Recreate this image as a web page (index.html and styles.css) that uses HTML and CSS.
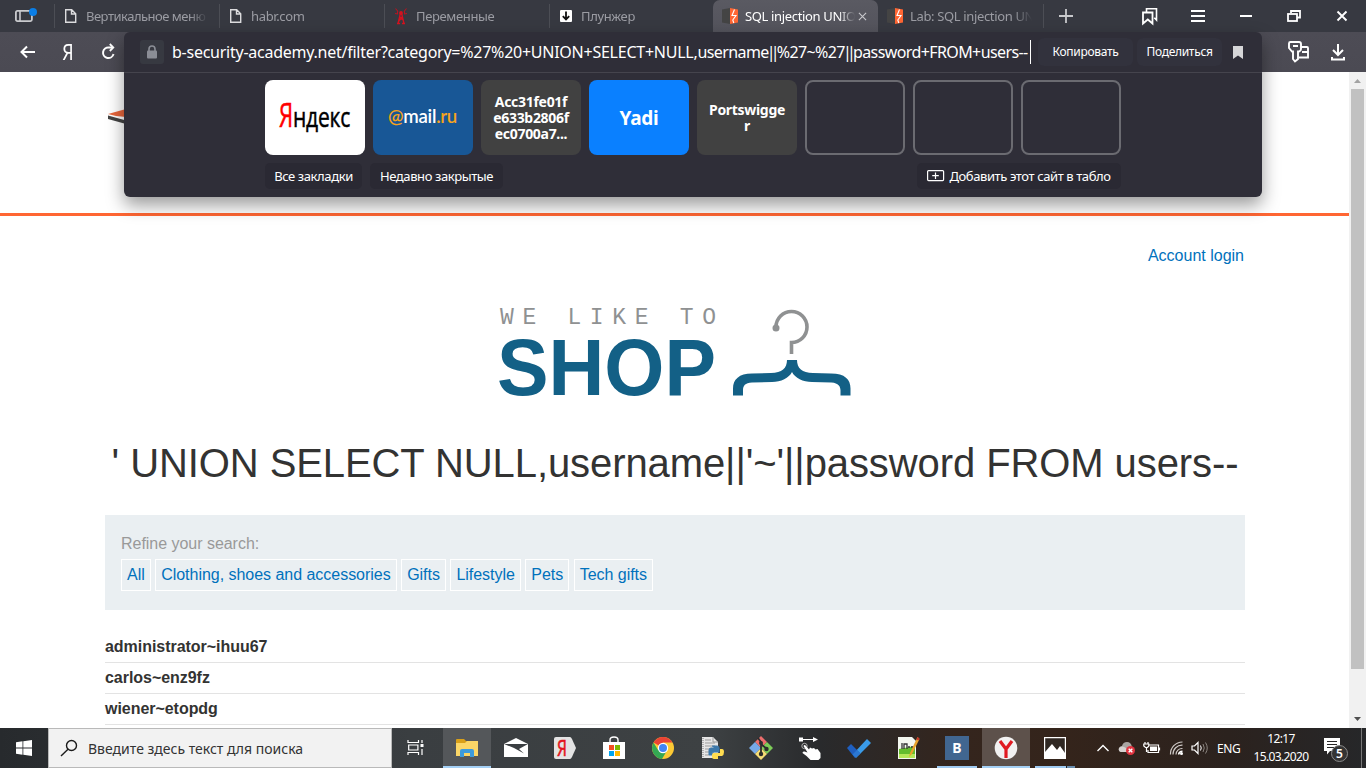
FILE: index.html
```html
<!DOCTYPE html>
<html lang="ru">
<head>
<meta charset="utf-8">
<title>SQL injection UNION</title>
<link rel="stylesheet" href="styles.css">
</head>
<body>
<div class="screen">
  <div class="tabbar">
    <div class="panel-btn"><svg width="24" height="18" viewBox="0 0 24 18"><rect x="1.9" y="4.9" width="16" height="10.200" rx="1.500" fill="none" stroke="#c9cacd" stroke-width="1.800"/><path d="M6 5v10" stroke="#c9cacd" stroke-width="1.600"/><circle cx="19" cy="6" r="4" fill="#0a7ee6"/></svg></div>
    <div class="tab"><svg class="fav" viewBox="0 0 16 16"><path d="M2.700 1.700h6l4 4v8.600h-10zM8.500 2v4h4" fill="none" stroke="#dcdcde" stroke-width="1.400"/></svg><span class="tt t1">Вертикальное меню</span></div>
    <div class="tab"><svg class="fav" viewBox="0 0 16 16"><path d="M2.700 1.700h6l4 4v8.600h-10zM8.500 2v4h4" fill="none" stroke="#dcdcde" stroke-width="1.400"/></svg><span class="tt">habr.com</span></div>
    <div class="tab"><svg class="fav" viewBox="0 0 16 16"><path d="M7.500 5L5 15.500M8.500 5L11 15.500M6 11h4.500M6.500 8.500l4 4M9.500 8.500l-4 5M4 15.500h3M9 15.500h3" stroke="#d5121f" stroke-width="1.300" fill="none"/><path d="M2.500 .500l2.500 3M13.500 .500l-2.500 3M2 5.500l3 .500M14 5.500l-3 .500M4.500 3v3M11.500 3v3" stroke="#b51522" stroke-width="1.100" fill="none"/><circle cx="8" cy="5" r="1.900" fill="#d5121f"/></svg><span class="tt">Переменные</span></div>
    <div class="tab nosep"><svg class="fav" viewBox="0 0 16 16"><rect x="2" y="2" width="12" height="12" rx="1" fill="#fff"/><path d="M8 3.500v8M4.800 8.200L8 11.500l3.200-3.300" stroke="#111" stroke-width="1.800" fill="none"/></svg><span class="tt">Плунжер</span></div>
    <div class="tab active"><svg class="fav" viewBox="0 0 16 16"><path d="M0 1.500L8 0v16l-8-1.500z" fill="#444"/><path d="M8 0l8 1.500v13L8 16z" fill="#ff6633"/><path d="M12.500 1.500L10 7.500h4L10.800 12l1 3" stroke="#fff" stroke-width="1.100" fill="none"/></svg><span class="tt">SQL injection UNION</span><svg class="close" viewBox="0 0 10 10"><path d="M1 1l8 8M9 1L1 9" stroke="#c9c9cd" stroke-width="1.200"/></svg></div>
    <div class="tab last"><svg class="fav" viewBox="0 0 16 16"><path d="M0 1.500L8 0v16l-8-1.500z" fill="#444"/><path d="M8 0l8 1.500v13L8 16z" fill="#ff6633"/><path d="M12.500 1.500L10 7.500h4L10.800 12l1 3" stroke="#fff" stroke-width="1.100" fill="none"/></svg><span class="tt">Lab: SQL injection UNION</span></div>
    <div class="plus"><svg width="16" height="16" viewBox="0 0 16 16"><path d="M8 1v14M1 8h14" stroke="#c8c9cc" stroke-width="1.800"/></svg></div>
    <div class="winbtns">
      <svg viewBox="0 0 18 18"><path d="M5.500 5V1.800h10V13l-2.200-2.300" fill="none" stroke="#fff" stroke-width="1.600"/><path d="M2 5.500h9.500v11l-4.700-4-4.800 4z" fill="none" stroke="#fff" stroke-width="1.800"/></svg>
      <svg viewBox="0 0 18 18"><path d="M2 4h14M2 9h14M2 14h14" stroke="#fff" stroke-width="2"/></svg>
      <svg viewBox="0 0 18 18"><path d="M3 9h12" stroke="#fff" stroke-width="2"/></svg>
      <svg viewBox="0 0 18 18"><path d="M6 6V4h9v6.500h-3" fill="none" stroke="#fff" stroke-width="1.800"/><rect x="3" y="7" width="9" height="7" fill="none" stroke="#fff" stroke-width="1.800"/></svg>
      <svg viewBox="0 0 18 18"><path d="M4.500 4.500l9 9M13.500 4.500l-9 9" stroke="#fff" stroke-width="1.900"/></svg>
    </div>
  </div>
  <div class="toolbar">
    <svg class="nav" viewBox="0 0 20 20"><path d="M17 10H4M9 4.500L3.500 10 9 15.500" fill="none" stroke="#fff" stroke-width="2"/></svg>
    <span class="ya">Я</span>
    <svg class="nav" viewBox="0 0 20 20"><path d="M15.500 12A5.300 5.300 0 1 1 11 5.500h4" fill="none" stroke="#fff" stroke-width="2"/><path d="M11.800 2L15.300 5.500l-3.500 3.500" fill="none" stroke="#fff" stroke-width="1.800"/></svg>
    <div class="right-tools">
      <svg width="24" height="24" viewBox="0 0 24 24"><path d="M2 3.500Q2 2 3.500 2H12Q14 2 14 4V9q0 2-2 2.500h-1V19l-3 2.500L6 19v-7.500H5L2 8z" fill="none" stroke="#fff" stroke-width="1.900"/><path d="M6 6h5M14 7h6q1 0 1 1v9.500h-9M15 12h6" fill="none" stroke="#fff" stroke-width="1.900"/></svg>
      <svg width="18" height="20" viewBox="0 0 18 20"><path d="M9 2v11M4 8l5 5 5-5M3 15v2.500h12V15" fill="none" stroke="#fff" stroke-width="2"/></svg>
    </div>
  </div>
  <div class="viewport">
    <div class="page">
      <header class="site-head">
        <svg width="42" height="24" viewBox="0 0 42 24"><path d="M2 6L20 1V9L10 8z" fill="#e8663c"/><path d="M2 7.500L20 12.500V16L2 11z" fill="#444"/></svg>
      </header>
      <main class="container">
        <div class="account"><a>Account login</a></div>
        <svg class="shop" width="352" height="92" viewBox="0 0 352 92" role="img">
          <text class="like" x="0" y="18" textLength="216">WE LIKE TO</text>
          <text class="shopword" x="-3" y="89" textLength="219" lengthAdjust="spacingAndGlyphs">SHOP</text>
          <path d="M276 20A15.500 15.500 0 1 1 291.500 35.500V47" transform="translate(0 1)" fill="none" stroke="#8f9192" stroke-width="3.600"/><circle cx="276" cy="22" r="3.500" fill="#8f9192"/>
          <path d="M287 54h10c0 8 5 13 16 13l18 .500c14 0 19.500 6 19.500 15v7h-10v-5c0-4-2-7.500-9-8l-19.500-.500c-9 0-17-4-20-10-3 6-11 10-20 10l-20 .500c-7 .500-9 3-9 8v5h-10v-7c0-9 6-15 19-15l19-.500c11 0 16-5 16-13z" fill="#136086"/>
        </svg>
        <h1>' UNION SELECT NULL,username||'~'||password FROM users--</h1>
        <section class="filter">
          <label>Refine your search:</label>
          <div class="tags"><a>All</a><a>Clothing, shoes and accessories</a><a>Gifts</a><a>Lifestyle</a><a>Pets</a><a>Tech gifts</a></div>
        </section>
        <div class="rows"><div>administrator~ihuu67</div><div>carlos~enz9fz</div><div>wiener~etopdg</div></div>
      </main>
    </div>
    <div class="scroll">
      <svg width="17" height="17" viewBox="0 0 17 17"><path d="M5 11l3.500-4 3.500 4z" fill="#a3a3a3"/></svg>
      <div class="thumb"></div>
      <svg class="down" width="17" height="17" viewBox="0 0 17 17"><path d="M5 6l3.500 4L12 6z" fill="#505050"/></svg>
    </div>
  </div>

  <div class="taskbar">
    <div class="start"><svg width="16" height="16" viewBox="0 0 16 16"><path d="M0 2.300L6.500 1.300V7.600H0zM7.300 1.200L16 0v7.600H7.300zM0 8.400h6.500v6.300L0 13.700zM7.300 8.400H16V16l-8.700-1.200z" fill="#fff"/></svg></div>
    <div class="search"><svg width="18" height="18" viewBox="0 0 18 18"><circle cx="11.500" cy="6.500" r="5" fill="none" stroke="#1b1b1b" stroke-width="1.400"/><path d="M8 10.200L1 17" stroke="#1b1b1b" stroke-width="1.400"/></svg><span>Введите здесь текст для поиска</span></div>
    <div class="tv"><svg width="18" height="18" viewBox="0 0 18 18"><path d="M1 1v2.500h10.500V1M1 16v-2.500h10.500V16M1.700 6h9.200v5H1.700zM15 1v3M15 10v6" fill="none" stroke="#fff" stroke-width="1.200"/><path d="M13.500 5h3v3h-3z" fill="#fff"/></svg></div>
    <div class="apps">
      <div class="app on full"><svg viewBox="0 0 24 24"><path d="M1 4q0-1 1-1h7l2 2H22q1 0 1 1V20H1z" fill="#d9a019"/><path d="M1 7h9l2-2h11v15H1z" fill="#fbd667"/><path d="M5 20v-5q0-2 2-2h10q2 0 2 2v6h-4v-4H9v4H5z" fill="#3d9bdc"/></svg></div>
      <div class="app"><svg viewBox="0 0 24 24"><path d="M0 8L12 2l12 6v13H0z" fill="#fff"/><path d="M0 8h24L15 13l5 4.500L10 12z" fill="#3a3e41"/></svg></div>
      <div class="app"><svg viewBox="0 0 24 24"><path d="M3 1h14q1 0 2 2l4 9-4 9q-1 2-2 2H3q-2 0-2-2V3q0-2 2-2z" fill="#e4e4e4"/><text x="4" y="20" class="yab" textLength="10" lengthAdjust="spacingAndGlyphs">Я</text></svg></div>
      <div class="app"><svg viewBox="0 0 24 24"><path d="M1 6h22v17H1z" fill="#fff"/><path d="M8 7V4q0-3 4-3t4 3v3" fill="none" stroke="#fff" stroke-width="1.400"/><path d="M7 9h5v5H7z" fill="#f25022"/><path d="M13 9h5v5h-5z" fill="#7fba00"/><path d="M7 15h5v5H7z" fill="#00a4ef"/><path d="M13 15h5v5h-5z" fill="#ffb900"/></svg></div>
      <div class="app"><svg viewBox="0 0 24 24"><circle cx="12" cy="12" r="11" fill="#fcc934"/><path d="M12 12L2.500 6.500A11 11 0 0 1 21.500 6.500H12z" fill="#ea4335"/><path d="M2.500 6.500A11 11 0 0 0 11 23l5-8.500L12 12 7 14z" fill="#34a853"/><circle cx="12" cy="12" r="5.200" fill="#fff"/><circle cx="12" cy="12" r="4" fill="#4285f4"/></svg></div>
      <div class="app"><svg viewBox="0 0 24 24"><path d="M2 1h11l5 5v16H2z" fill="#e6e6e6"/><path d="M13 1v5h5M5 4h6M5 7h10M5 10h10M5 13h5M5 16h5M5 19h4" fill="none" stroke="#9b9b9b"/><path d="M3 2v19" stroke="#777" stroke-dasharray="1 1"/><path d="M12 10h5q2 0 2 2v4h-5q-2 0-2 3H9v-5q0-2 2-2h3" fill="#3c78aa" stroke="#3c78aa"/><path d="M20 13h2q2 0 2 3t-2 4h-4v3h-4q-2 0-2-2v-2q0-2 2-2h6z" fill="#ffdc50"/></svg></div>
      <div class="app"><svg viewBox="0 0 24 24"><path d="M12 0l6 6-6 6-6-6z" fill="#ec6d6d"/><path d="M6 6l6 6-6 6-6-6z" fill="#76a9e8"/><path d="M18 6l6 6-6 6-6-6z" fill="#7dcc58"/><path d="M12 12l6 6-6 6-6-6z" fill="#f5dc75"/><path d="M9 2l3 4v13M12 8l6 5" fill="none" stroke="#2c2c2c" stroke-width="1.800"/><circle cx="12" cy="7" r="2" fill="#2c2c2c"/><circle cx="12" cy="18" r="2.200" fill="#2c2c2c"/><circle cx="17.500" cy="13" r="2.200" fill="#2c2c2c"/></svg></div>
      <div class="app"><svg viewBox="0 0 24 24"><path d="M1 1.500h4v4H1zM15 1l5 2.500L15 6z" fill="#fff"/><path d="M5 3.500h12" stroke="#fff"/><circle cx="6.500" cy="10" r="2.700" fill="none" stroke="#aaa"/><path d="M5.500 10q1-2 2.500 0l3 3.500 1-2 2 1 2-.500 1.500 1.500 2-.500 3 4v5l-2 2h-8l-4-4-4-3q0-2 2-1.500l3 1z" fill="#fff"/></svg></div>
      <div class="app"><svg viewBox="0 0 24 24"><path d="M6 18L20 3l4 4L9 22z" fill="#3a9be8"/><path d="M0 12l4-4 9 9-5 5z" fill="#1f5fc0"/><path d="M8.500 21.500L5.500 18.500 10 14l3.500 3.500z" fill="#2b78d4"/></svg></div>
      <div class="app"><svg viewBox="0 0 24 24"><path d="M2 1h14l4 4v18H2z" fill="#f4f7f0"/><path d="M3 13l16-3v12H3z" fill="#63bd2d"/><path d="M3 18h16v4H3z" fill="#b4e858"/><path d="M6 13V7M8 13V8h3v5M12 11h2M15 11h2" stroke="#333" stroke-width="1.300" fill="none"/><path d="M21.500 1L14 17l-1 4 3-3L23.500 3z" fill="#e9a32c"/><path d="M21.500 1l2 1.500-1 2-2-1z" fill="#c6352c"/></svg></div>
      <div class="app line"><span class="vk">B</span></div>
      <div class="app on2 full"><svg viewBox="0 0 24 24"><circle cx="12" cy="12" r="11.300" fill="#f1f1f1"/><path d="M6 5l6 8 6-8M12 12v10" fill="none" stroke="#e01a22" stroke-width="3.200"/></svg></div>
      <div class="app line two"><svg viewBox="0 0 24 24"><path d="M1.600 1.600h20.800v20.800H1.600z" fill="#2f2722" stroke="#fff" stroke-width="1.200"/><path d="M2 16l7-8 5 6 3-4 5 7v5H2z" fill="#fff"/></svg></div>
    </div>
    <div class="tray">
      <svg class="chev" width="14" height="10" viewBox="0 0 14 10"><path d="M1.500 8L7 2.500 12.500 8" fill="none" stroke="#fff" stroke-width="1.400"/></svg>
      <svg class="cloud" width="18" height="16" viewBox="0 0 18 16"><path d="M3 12q-3-1-2-4 1-2 3-2 1-4 5-4 4 0 5 5v5z" fill="#a9a5a2"/><path d="M3 12q-3-1-2-4 3-3 7 0l3 4z" fill="#d5d2d0"/><circle cx="12.500" cy="10.500" r="4.500" fill="#e03440"/><path d="M10.700 8.700l3.600 3.600M14.300 8.700l-3.600 3.600" stroke="#fff" stroke-width="1.400"/></svg>
      <svg class="bat" width="17" height="14" viewBox="0 0 17 14"><path d="M6 4h9.500v7.500H5V9M16.500 6.500v3M2 1v2M5 1v2M.800 3h5v2L4.500 6.500h-2L.800 5zM3.500 6v5" fill="none" stroke="#fff" stroke-width="1.200"/><path d="M7 5.500h7v4.500H7z" fill="#fff"/></svg>
      <svg class="wifi" width="16" height="16" viewBox="0 0 16 16"><path d="M1.500 14.500A12 12 0 0 1 13.500 2M4 14.500A9 9 0 0 1 13.500 5.200M7 14.500a6 6 0 0 1 6.500-6" fill="none" stroke="#cfcac7" stroke-width="1.200"/><path d="M9.500 14.500a4 4 0 0 1 4-3.200" fill="none" stroke="#fff" stroke-width="1.400"/><circle cx="12.500" cy="13.500" r="1.500" fill="#fff"/></svg>
      <svg class="snd" width="18" height="14" viewBox="0 0 18 14"><path d="M1 5h2.500L7 1.500v11L3.500 9H1z" fill="none" stroke="#fff" stroke-width="1.200"/><path d="M9.500 4.500q1.500 2.500 0 5" fill="none" stroke="#fff"/><path d="M12 3q2.500 4 0 8M14.500 1.500q3.500 5.500 0 11" fill="none" stroke="#8b8580"/></svg>
      <span class="lang">ENG</span>
      <div class="clock"><span>12:17</span><span class="date">15.03.2020</span></div>
      <div class="note"><svg width="26" height="26" viewBox="0 0 26 26"><path d="M1 1h16v13H7l-3 3.500V14H1z" fill="#fff"/><path d="M4 4.500h10M4 7.500h10M4 10.500h7" stroke="#282727" stroke-width="1.200"/><circle cx="16.500" cy="16.500" r="8" fill="#343434" stroke="#8a8a8a" stroke-width="1"/></svg><b>5</b></div>
    </div>
  </div>

  <div class="omni">
    <div class="urlrow">
      <div class="lock"><svg width="12" height="14" viewBox="0 0 12 14"><path d="M3 6V4q0-3 3-3t3 3v2" fill="none" stroke="#8b8e96" stroke-width="1.600"/><rect x="1" y="5.500" width="10" height="8" rx="1" fill="#8b8e96"/></svg></div>
      <span class="url">b-security-academy.net/filter?category=%27%20+UNION+SELECT+NULL,<span class="tight">username<span class="pp">||</span>%27~%27<span class="pp">||</span>password+FROM+users--</span></span>
      <i class="caret"></i>
      <span class="ubtn copy">Копировать</span><span class="ubtn share">Поделиться</span>
      <svg class="bm" width="10" height="13" viewBox="0 0 10 13"><path d="M0 0h10v13L5 9.500 0 13z" fill="#d6d6d8"/></svg>
    </div>
    <div class="tiles">
      <div class="tile white"><svg width="72" height="32" viewBox="0 0 72 32"><text x="0" y="25" class="yar" textLength="14" lengthAdjust="spacingAndGlyphs">Я</text><text x="14" y="25" class="yan" textLength="57" lengthAdjust="spacingAndGlyphs">ндекс</text></svg></div>
      <div class="tile mail"><svg width="72" height="24" viewBox="0 0 72 24"><text x="1" y="17" class="mr" textLength="69" lengthAdjust="spacingAndGlyphs"><tspan class="or">@</tspan>mail<tspan class="or">.ru</tspan></text></svg></div>
      <div class="tile gray"><span>Acc31fe01f<br>e633b2806f<br>ec0700a7...</span></div>
      <div class="tile blue"><span>Yadi</span></div>
      <div class="tile gray"><span>Portswigge<br>r</span></div>
      <div class="tile empty"></div><div class="tile empty"></div><div class="tile empty"></div>
    </div>
    <div class="foot"><span class="fb a">Все закладки</span><span class="fb b">Недавно закрытые</span><span class="fb c"><svg width="18" height="12" viewBox="0 0 18 12"><rect x=".6" y=".6" width="16" height="10" rx="1" fill="none" stroke="#fff" stroke-width="1.200"/><path d="M8.500 2.500v6.500M5.200 5.700h6.600" stroke="#fff" stroke-width="1.200"/></svg><em>Добавить этот сайт в табло</em></span></div>
  </div>
</div>
</body>
</html>
```
FILE: styles.css
```css
* { box-sizing: border-box; }
body { margin: 0; overflow: hidden; font-family: "Noto Sans", "Open Sans", sans-serif; }
svg { display: block; flex: none; overflow: visible; }
.screen { position: relative; width: 1366px; height: 768px; display: flex; flex-direction: column; overflow: hidden; background: #fff; white-space: nowrap; }

.tabbar { height: 32px; flex: none; display: flex; background: #373941; color: #9b9ca3; font-size: 13px; }
.panel-btn { width: 54px; padding: 6px 0 0 14px; }
.tab { width: 165px; display: flex; align-items: center; padding: 0 13px 0 9px; background: linear-gradient(#4c4e55, #4c4e55) 0 4px / 1px 24px no-repeat; }
.tab .fav { width: 16px; height: 16px; margin-right: 7px; }
.tt { overflow: hidden; width: 122px; flex: none; letter-spacing: -.35px; -webkit-mask-image: linear-gradient(90deg, #000 85%, transparent); }
.t1 { letter-spacing: -.5px; }
.nosep { width: 164px; }
.active { background: linear-gradient(#5a5a62, #53535c); color: #fff; border-radius: 7px 7px 0 0; }
.active .tt { width: 110px; }
.active .close { width: 9px; height: 9px; margin-left: 3px; }
.last { width: 166px; background: linear-gradient(#4c4e55, #4c4e55) 100% 4px / 1px 24px no-repeat; }
.plus { margin-left: 14px; padding-top: 8px; width: 46px; }
.winbtns { display: flex; gap: 30px; align-items: center; margin-left: 37px; }
.winbtns svg { width: 18px; height: 18px; }

.toolbar { height: 40px; flex: none; display: flex; align-items: center; padding: 0 19px 0 18px; background: linear-gradient(#4d4c55, #4b4a53); }
.nav { width: 20px; height: 20px; }
.ya { width: 20px; margin: 0 20px; text-align: center; font-size: 21px; line-height: 30px; color: #fff; transform: scaleX(.85); }
.right-tools { margin-left: auto; display: flex; align-items: center; gap: 18px; }

.viewport { height: 656px; display: flex; background: #fff; }
.page { width: 1349px; overflow: hidden; font: 16px/24px "Liberation Sans", Arial, sans-serif; color: #333332; }
.site-head { height: 144px; border-bottom: 3px solid #ff6633; padding: 36px 0 0 106px; }
.container { width: 1140px; margin: 0 auto 0 105px; }
.account { text-align: right; padding: 28px 1px 0 0; height: 90px; }
a { color: #0071bc; }
.shop { margin-left: 395px; }
.like { font: 23px "Liberation Mono", monospace; fill: #8f9192; }
.shopword { font: bold 80px "Liberation Sans", Arial, sans-serif; fill: #136086; }
h1 { margin: 41px 0 0; height: 76px; font-size: 40px; line-height: 48px; font-weight: 400; text-align: center; letter-spacing: -.09px; }
.filter { height: 95px; background: #eaeff2; padding: 17px 16px 0; }
.filter label { display: block; color: #999; height: 27px; letter-spacing: -.03px; }
.tags { display: flex; gap: 4.500px; }
.tags a { height: 32px; border: 1px solid #fff; padding: 0 5px; line-height: 30px; letter-spacing: -.03px; }
.rows { padding-top: 22px; font-weight: 700; letter-spacing: -.04px; }
.rows div { height: 31px; line-height: 29px; border-bottom: 1px solid #e3e3e3; }
.scroll { width: 17px; background: #f1f1f1; display: flex; flex-direction: column; align-items: center; }
.thumb { width: 13px; height: 580px; background: #c1c1c1; }
.down { margin-top: auto; }

.taskbar { height: 40px; flex: none; display: flex; background: linear-gradient(90deg, #272a2d 0, #3a3e41 30%, #3d4143 52%, #292a2c 60%, #34251d 70%, #34241b 78%, #2b221e 90%, #262729 100%); }
.start { width: 48px; padding: 12px 16px; }
.search { width: 344px; background: #f2f2f2; border: 1px solid #b9b9b9; display: flex; align-items: center; padding-left: 11px; gap: 10px; font-size: 14px; color: #333; letter-spacing: 0; }
.tv { width: 51px; padding: 11px 0 0 15px; }
.apps { display: flex; gap: 1px; width: 636px; }
.app { width: 48px; display: flex; align-items: center; justify-content: center; }
.app svg { width: 24px; height: 24px; }
.on { background: linear-gradient(#a4d0f5, #a4d0f5) 0 100% / 100% 2px no-repeat, #54575a; }
.on2 { background: linear-gradient(#a4d0f5, #a4d0f5) 0 100% / 100% 2px no-repeat, #5d514b; }
.line { background: linear-gradient(#9fcaf1, #9fcaf1) 4px 100% / 40px 2px no-repeat; }
.two { background: linear-gradient(90deg, #9fcaf1 31px, #222 31px, #222 32px, #6a8eaf 32px) 4px 100% / 40px 2px no-repeat; }
.yab { font: 22px "Noto Sans", sans-serif; fill: #e3151e; stroke: #e3151e; stroke-width: .5px; }
.vk { width: 24px; height: 24px; background: #416690; color: #fff; font: bold 14px/24px "Noto Sans", sans-serif; text-align: center; }
.tray { flex: 1; display: flex; align-items: center; padding-left: 17px; color: #fff; font-size: 12px; border-right: 1px solid #777; margin-right: 4px; }
.cloud { margin-left: 8px; }
.bat { margin-left: 7px; }
.wifi { margin-left: 9px; }
.snd { margin-left: 6px; }
.lang { width: 25px; margin-left: 8px; letter-spacing: -.4px; }
.clock { display: flex; flex-direction: column; align-items: center; margin-left: 9px; width: 60px; line-height: 18px; letter-spacing: -.6px; }
.date { letter-spacing: -.65px; }
.note { position: relative; margin: 4px 0 0 12px; }
.note b { position: absolute; left: 13px; top: 8px; line-height: 17px; font-weight: 600; }

.omni { position: absolute; left: 124px; top: 32px; width: 1138px; height: 165px; border-radius: 6px; background: #2f2e38; color: #fff; box-shadow: 0 8px 18px rgba(0,0,0,.4); }
.urlrow { height: 41px; border-bottom: 1px solid #45444d; display: flex; align-items: center; padding-left: 16px; }
.lock { width: 24px; height: 24px; background: #373941; border-radius: 3px; padding: 5px 6px; margin-right: 8px; }
.url { width: 858px; flex: none; font-size: 16px; letter-spacing: -.25px; }
.tight { letter-spacing: -.6px; }
.pp { letter-spacing: -4.8px; margin-left: -2px; margin-right: 2px; }
.caret { width: 1px; height: 24px; background: #fff; flex: none; }
.ubtn { height: 28px; border-radius: 6px; background: #32323d; font-size: 12px; line-height: 27px; text-align: center; letter-spacing: -.3px; }
.copy { width: 95px; margin-left: 7px; }
.share { width: 85px; margin: 0 11px 0 4px; }
.tiles { display: flex; gap: 8px; padding: 7px 0 0 141px; }
.tile { width: 100px; height: 75px; border-radius: 8px; display: flex; align-items: center; justify-content: center; text-align: center; font-weight: 700; font-size: 14px; line-height: 16px; letter-spacing: -.3px; }
.white { background: #fff; }
.mail { background: #185796; }
.gray { background: #414141; }
.blue { background: #0a80ff; font-size: 19px; }
.empty { border: 2px solid #6b6b71; }
.yar, .yan { font: 28px "Open Sans", sans-serif; fill: #000; stroke: #000; stroke-width: .5px; }
.yar { font-size: 33px; fill: #f00; stroke: #f00; }
.mr { font: 600 19px Lato, sans-serif; fill: #fff; }
.or { fill: #f5a31d; }
.foot { display: flex; padding: 8px 17px 0 141px; width: 997px; }
.fb { height: 26px; border-radius: 5px; background: #2a2933; font-size: 13px; line-height: 26px; text-align: center; letter-spacing: -.4px; }
.a { width: 97px; margin-right: 8px; }
.b { width: 133px; }
.c { width: 204px; margin-left: auto; margin-right: -17px; display: flex; align-items: center; justify-content: center; gap: 4px; }
em { font-style: normal; }
```
